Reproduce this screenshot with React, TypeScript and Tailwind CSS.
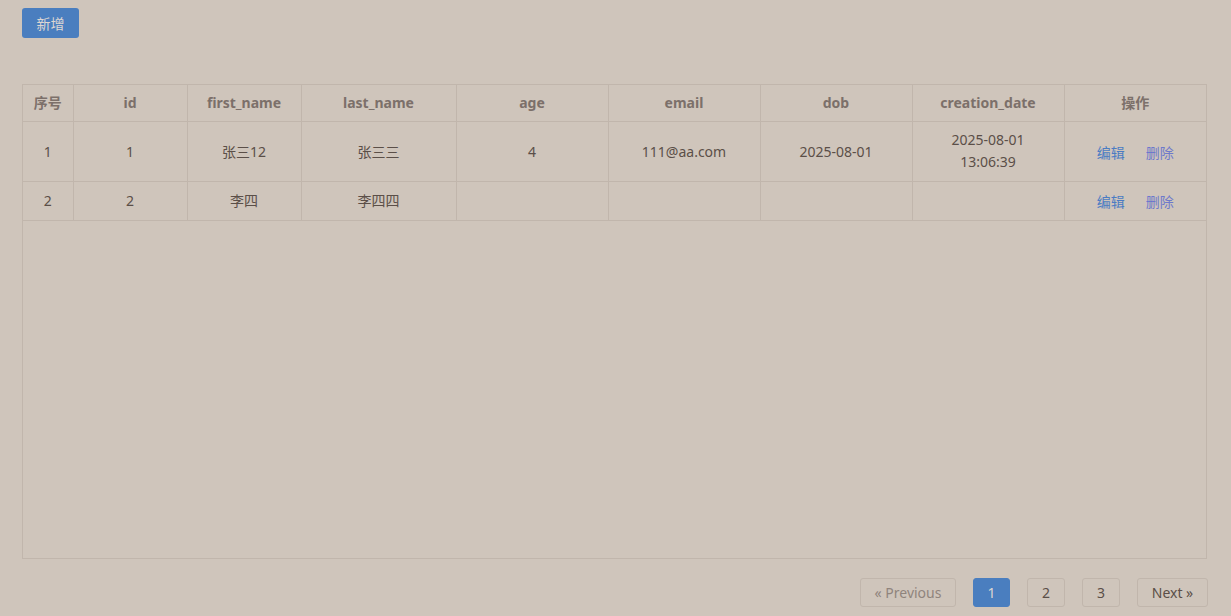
import React from 'react'

const font = { fontFamily: '"Noto Sans", "Noto Sans CJK SC", sans-serif' }

const columns = [
  { key: 'no', label: '序号', w: 'w-[50px]' },
  { key: 'id', label: 'id', w: 'w-[114px]' },
  { key: 'first_name', label: 'first_name', w: 'w-[114px]' },
  { key: 'last_name', label: 'last_name', w: 'w-[155px]' },
  { key: 'age', label: 'age', w: 'w-[152px]' },
  { key: 'email', label: 'email', w: 'w-[152px]' },
  { key: 'dob', label: 'dob', w: 'w-[152px]' },
  { key: 'creation_date', label: 'creation_date', w: 'w-[152px]' },
  { key: 'ops', label: '操作', w: 'w-[142px]' },
]

const rows = [
  {
    no: '1',
    id: '1',
    first_name: '张三12',
    last_name: '张三三',
    age: '4',
    email: '111@aa.com',
    dob: '2025-08-01',
    creation_date: ['2025-08-01', '13:06:39'],
  },
  {
    no: '2',
    id: '2',
    first_name: '李四',
    last_name: '李四四',
    age: '',
    email: '',
    dob: '',
    creation_date: [],
  },
]

export default function App() {
  return (
    <div className="min-h-[616px] w-full bg-[#cfc5bb] px-[22px] pt-[8px] text-[14px] text-[#5b4f48]" style={font}>
      {/* toolbar */}
      <button className="h-[30px] w-[57px] rounded-[3px] bg-[#4a7ebf] text-[14px] text-[#ddd6d2]">
        新增
      </button>

      {/* table box */}
      <div className="mt-[46px] h-[475px] w-[1185px] border border-[#c1b6ac]">
        <table className="w-full table-fixed border-collapse">
          <thead>
            <tr className="h-[36px]">
              {columns.map((c, i) => (
                <th
                  key={c.key}
                  className={`${c.w} border-b border-[#c1b6ac] ${i > 0 ? 'border-l' : ''} p-0 pb-[1px] text-center text-[14px] font-bold text-[#7c706a]`}
                >
                  {c.label}
                </th>
              ))}
            </tr>
          </thead>
          <tbody>
            {rows.map((r) => (
              <tr key={r.no} className={r.creation_date.length > 1 ? 'h-[60px]' : 'h-[39px]'}>
                <td className="border-b border-[#c1b6ac] p-0 text-center">{r.no}</td>
                <td className="border-b border-l border-[#c1b6ac] p-0 text-center">{r.id}</td>
                <td className="border-b border-l border-[#c1b6ac] p-0 text-center">{r.first_name}</td>
                <td className="border-b border-l border-[#c1b6ac] p-0 text-center">{r.last_name}</td>
                <td className="border-b border-l border-[#c1b6ac] p-0 text-center">{r.age}</td>
                <td className="border-b border-l border-[#c1b6ac] p-0 text-center">{r.email}</td>
                <td className="border-b border-l border-[#c1b6ac] p-0 text-center">{r.dob}</td>
                <td className="border-b border-l border-[#c1b6ac] p-0 text-center leading-[22px]">
                  {r.creation_date.map((d) => (
                    <div key={d}>{d}</div>
                  ))}
                </td>
                <td className="border-b border-l border-[#c1b6ac] p-0 text-center">
                  <div className="flex items-center justify-center gap-[21px] pt-[2px]">
                    <a className="text-[#4b7cc3]">编辑</a>
                    <a className="text-[#6d79cb]">删除</a>
                  </div>
                </td>
              </tr>
            ))}
          </tbody>
        </table>
      </div>

      {/* pagination */}
      <div className="mt-[19px] flex justify-end gap-[17px] pr-[1px]">
        <button className="h-[29px] w-[96px] rounded-[3px] border border-[#c1b6ac] text-[14px] text-[#8f847d]">
          « Previous
        </button>
        <button className="h-[29px] w-[37px] rounded-[3px] border border-[#4a7ebf] bg-[#4a7ebf] text-[14px] text-[#ddd6d2]">
          1
        </button>
        <button className="h-[29px] w-[38px] rounded-[3px] border border-[#c1b6ac] text-[14px] text-[#5b4f48]">
          2
        </button>
        <button className="h-[29px] w-[38px] rounded-[3px] border border-[#c1b6ac] text-[14px] text-[#5b4f48]">
          3
        </button>
        <button className="h-[29px] w-[71px] rounded-[3px] border border-[#c1b6ac] text-[14px] text-[#5b4f48]">
          Next »
        </button>
      </div>
    </div>
  )
}
